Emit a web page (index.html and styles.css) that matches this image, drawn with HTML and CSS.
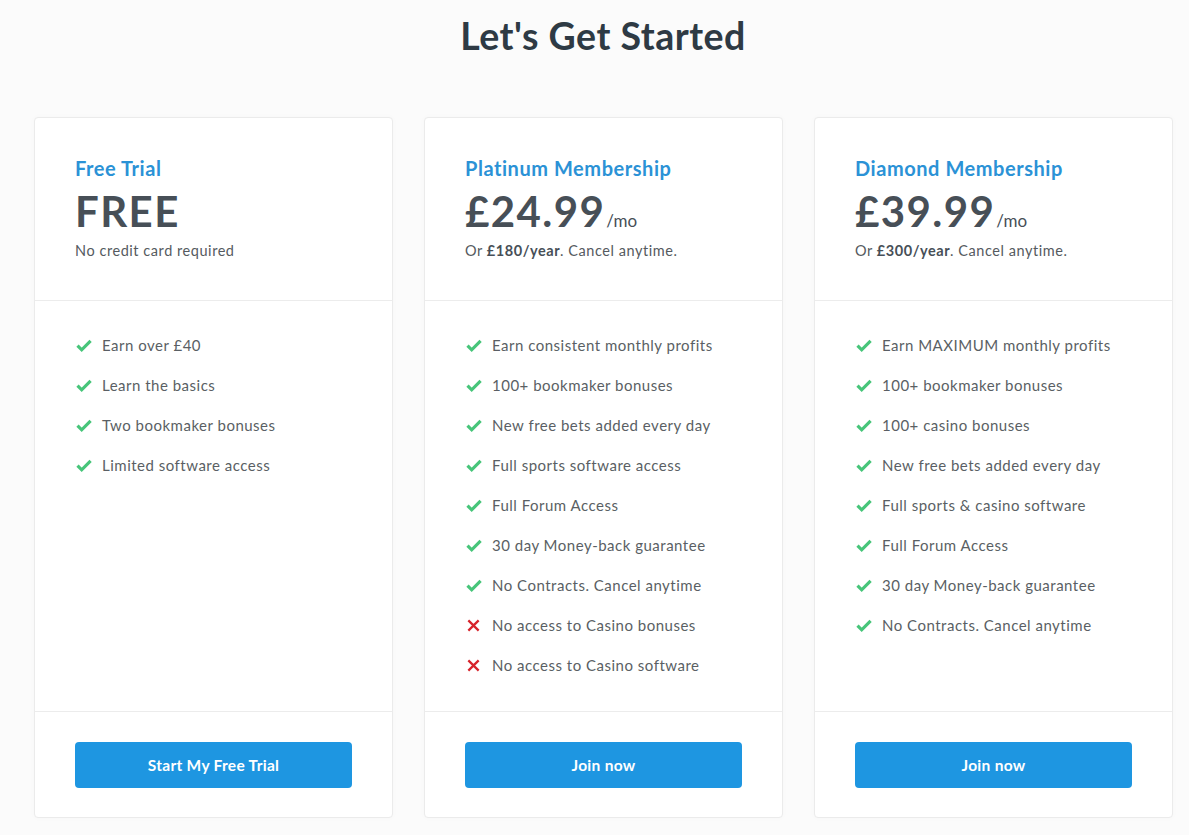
FILE: index.html
```html
<!DOCTYPE html>
<html lang="en">
<head>
<meta charset="utf-8">
<title>Let's Get Started</title>
<link rel="stylesheet" href="styles.css">
</head>
<body>
<main class="page">
  <h1 class="title">Let's Get Started</h1>
  <div class="plans">
    <section class="card">
      <header class="card-head">
        <h2 class="plan-name">Free Trial</h2>
        <div class="price"><span class="amount">FREE</span></div>
        <p class="note">No credit card required</p>
      </header>
      <ul class="features">
        <li><svg class="ico ok" viewBox="0 0 16 16"><path d="M1.5 8.6l4.2 4.2L14.6 3.9"/></svg>Earn over £40</li>
        <li><svg class="ico ok" viewBox="0 0 16 16"><path d="M1.5 8.6l4.2 4.2L14.6 3.9"/></svg>Learn the basics</li>
        <li><svg class="ico ok" viewBox="0 0 16 16"><path d="M1.5 8.6l4.2 4.2L14.6 3.9"/></svg>Two bookmaker bonuses</li>
        <li><svg class="ico ok" viewBox="0 0 16 16"><path d="M1.5 8.6l4.2 4.2L14.6 3.9"/></svg>Limited software access</li>
      </ul>
      <footer class="card-foot"><a class="btn" href="#">Start My Free Trial</a></footer>
    </section>
    <section class="card">
      <header class="card-head">
        <h2 class="plan-name">Platinum Membership</h2>
        <div class="price"><span class="amount">£24.99</span><span class="per">/mo</span></div>
        <p class="note">Or <b>£180/year</b>. Cancel anytime.</p>
      </header>
      <ul class="features">
        <li><svg class="ico ok" viewBox="0 0 16 16"><path d="M1.5 8.6l4.2 4.2L14.6 3.9"/></svg>Earn consistent monthly profits</li>
        <li><svg class="ico ok" viewBox="0 0 16 16"><path d="M1.5 8.6l4.2 4.2L14.6 3.9"/></svg>100+ bookmaker bonuses</li>
        <li><svg class="ico ok" viewBox="0 0 16 16"><path d="M1.5 8.6l4.2 4.2L14.6 3.9"/></svg>New free bets added every day</li>
        <li><svg class="ico ok" viewBox="0 0 16 16"><path d="M1.5 8.6l4.2 4.2L14.6 3.9"/></svg>Full sports software access</li>
        <li><svg class="ico ok" viewBox="0 0 16 16"><path d="M1.5 8.6l4.2 4.2L14.6 3.9"/></svg>Full Forum Access</li>
        <li><svg class="ico ok" viewBox="0 0 16 16"><path d="M1.5 8.6l4.2 4.2L14.6 3.9"/></svg>30 day Money-back guarantee</li>
        <li><svg class="ico ok" viewBox="0 0 16 16"><path d="M1.5 8.6l4.2 4.2L14.6 3.9"/></svg>No Contracts. Cancel anytime</li>
        <li><svg class="ico no" viewBox="0 0 16 16"><path d="M2.5 2.5l11 11M13.5 2.5l-11 11"/></svg>No access to Casino bonuses</li>
        <li><svg class="ico no" viewBox="0 0 16 16"><path d="M2.5 2.5l11 11M13.5 2.5l-11 11"/></svg>No access to Casino software</li>
      </ul>
      <footer class="card-foot"><a class="btn" href="#">Join now</a></footer>
    </section>
    <section class="card">
      <header class="card-head">
        <h2 class="plan-name">Diamond Membership</h2>
        <div class="price"><span class="amount">£39.99</span><span class="per">/mo</span></div>
        <p class="note">Or <b>£300/year</b>. Cancel anytime.</p>
      </header>
      <ul class="features">
        <li><svg class="ico ok" viewBox="0 0 16 16"><path d="M1.5 8.6l4.2 4.2L14.6 3.9"/></svg>Earn MAXIMUM monthly profits</li>
        <li><svg class="ico ok" viewBox="0 0 16 16"><path d="M1.5 8.6l4.2 4.2L14.6 3.9"/></svg>100+ bookmaker bonuses</li>
        <li><svg class="ico ok" viewBox="0 0 16 16"><path d="M1.5 8.6l4.2 4.2L14.6 3.9"/></svg>100+ casino bonuses</li>
        <li><svg class="ico ok" viewBox="0 0 16 16"><path d="M1.5 8.6l4.2 4.2L14.6 3.9"/></svg>New free bets added every day</li>
        <li><svg class="ico ok" viewBox="0 0 16 16"><path d="M1.5 8.6l4.2 4.2L14.6 3.9"/></svg>Full sports &amp; casino software</li>
        <li><svg class="ico ok" viewBox="0 0 16 16"><path d="M1.5 8.6l4.2 4.2L14.6 3.9"/></svg>Full Forum Access</li>
        <li><svg class="ico ok" viewBox="0 0 16 16"><path d="M1.5 8.6l4.2 4.2L14.6 3.9"/></svg>30 day Money-back guarantee</li>
        <li><svg class="ico ok" viewBox="0 0 16 16"><path d="M1.5 8.6l4.2 4.2L14.6 3.9"/></svg>No Contracts. Cancel anytime</li>
      </ul>
      <footer class="card-foot"><a class="btn" href="#">Join now</a></footer>
    </section>
  </div>
</main>
</body>
</html>
```

FILE: styles.css
```css
* { box-sizing: border-box; }
html, body { margin: 0; padding: 0; }
body {
  background: #fbfbfb;
  font-family: "Lato", "Noto Sans", sans-serif;
  color: #555a60;
}
.page {
  padding: 14px 17px 16px 34px;
}
.title {
  margin: 0 0 59px;
  text-align: center;
  font-size: 37.5px;
  line-height: 44px;
  font-weight: 700;
  color: #2e3a44;
  letter-spacing: 0.5px;
}
.plans {
  display: grid;
  grid-template-columns: 359px 359px 359px;
  column-gap: 31px;
  height: 701px;
}
.card {
  background: #fff;
  border: 1px solid #ebebeb;
  border-radius: 4px;
  box-shadow: 0 0 6px rgba(0,0,0,0.025);
  display: flex;
  flex-direction: column;
}
.card-head {
  padding: 38px 40px 38px;
  border-bottom: 1px solid #ececec;
  height: 183px;
}
.plan-name {
  margin: 0;
  font-size: 20px;
  line-height: 24px;
  font-weight: 700;
  color: #2b92d6;
  letter-spacing: 0.55px;
}
.price {
  display: flex;
  align-items: baseline;
  margin-top: 7px;
  height: 48px;
}
.amount {
  font-size: 42px;
  line-height: 48px;
  font-weight: 700;
  color: #474f57;
  letter-spacing: 1.4px;
}
.per {
  font-size: 17px;
  font-weight: 400;
  color: #474f57;
  margin-left: 1px;
}
.note {
  margin: 6px 0 0;
  font-size: 14.5px;
  line-height: 20px;
  color: #555a60;
  letter-spacing: 0.55px;
}
.note b { font-weight: 700; color: #474f57; }
.features {
  list-style: none;
  margin: 0;
  padding: 24px 40px 0;
  flex: 1;
  border-bottom: 1px solid #ececec;
}
.features li {
  display: flex;
  align-items: center;
  height: 40px;
  font-size: 15px;
  color: #5a5f64;
  letter-spacing: 0.5px;
}
.ico {
  width: 16px;
  height: 16px;
  margin: 0 10px 0 1px;
  fill: none;
  stroke-linecap: butt;
  flex: none;
}
.ico.ok { stroke: #47c57a; stroke-width: 3.2; }
.ico.no { stroke: #d7232b; stroke-width: 2.4; width: 15px; height: 15px; margin-right: 11px; }
.card-foot {
  padding: 30px 40px 29px;
}
.btn {
  display: flex;
  align-items: center;
  justify-content: center;
  height: 46px;
  background: #1e96e1;
  border-radius: 4px;
  color: #fff;
  text-decoration: none;
  font-size: 15.5px;
  font-weight: 700;
  letter-spacing: 0.3px;
}
```
